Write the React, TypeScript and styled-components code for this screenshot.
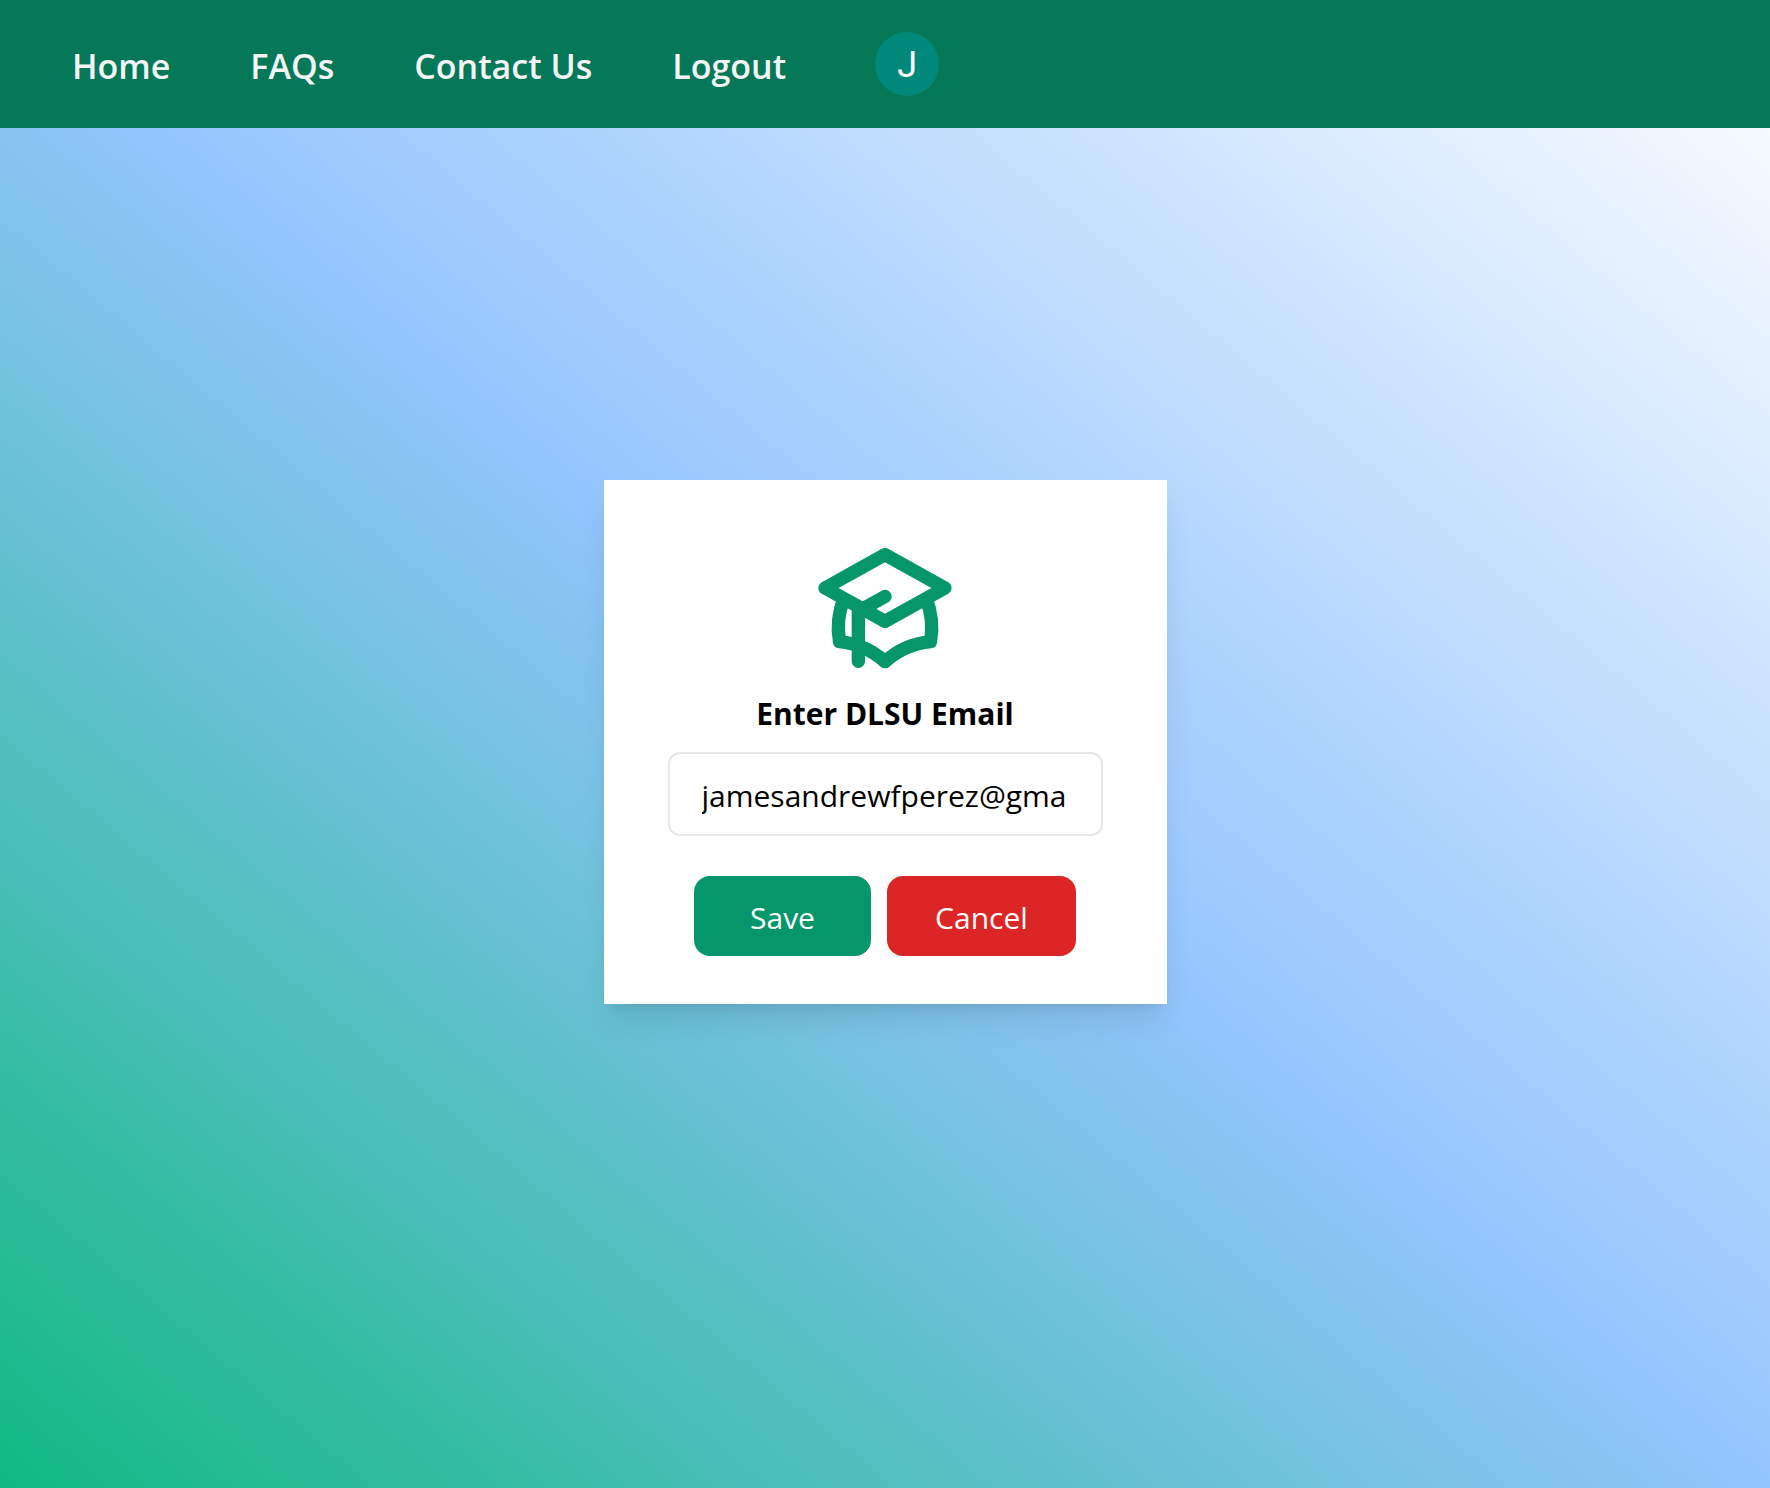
import React, { useState } from "react";
import styled, { createGlobalStyle } from "styled-components";

const GlobalStyle = createGlobalStyle`
  *, *::before, *::after { box-sizing: border-box; }
  body {
    margin: 0;
    font-family: "Segoe UI", "Open Sans", "Noto Sans", sans-serif;
    color: #000;
  }
`;

const Page = styled.div`
  display: flex;
  flex-direction: column;
  min-height: 100vh;
  background: linear-gradient(to top right, #10b981, #93c5fd, #ffffff);
`;

const NavBar = styled.nav`
  display: flex;
  align-items: center;
  gap: 80px;
  height: 128px;
  padding: 0 72px;
  background: #047857;
`;

const NavLink = styled.a`
  padding-top: 4px;
  font-size: 34px;
  line-height: 56px;
  font-weight: 600;
  color: #f3f4f6;
  text-decoration: none;
`;

const Avatar = styled.div`
  display: flex;
  align-items: center;
  justify-content: center;
  width: 64px;
  height: 64px;
  margin-left: 9px;
  padding-top: 2px;
  border-radius: 50%;
  background: #00897b;
  color: #fff;
  font-family: Roboto, sans-serif;
  font-size: 36px;
  line-height: 64px;
`;

const Main = styled.main`
  display: flex;
  flex: 1;
  align-items: center;
  justify-content: center;
  padding-bottom: 132px;
`;

const Card = styled.form`
  display: flex;
  flex-direction: column;
  align-items: center;
  padding: 48px 64px;
  background: #fff;
  box-shadow: 0 20px 30px -6px rgba(0, 0, 0, 0.1), 0 8px 12px -8px rgba(0, 0, 0, 0.1);
`;

const CapIcon = styled.svg`
  display: block;
  width: 160px;
  height: 160px;
  color: #059669;
`;

const Label = styled.label`
  font-size: 30px;
  line-height: 52px;
  font-weight: 700;
`;

const EmailInput = styled.input`
  width: 435px;
  height: 84px;
  margin-top: 12px;
  padding: 2px 34px 0 32px;
  border: 2px solid #e5e7eb;
  border-radius: 12px;
  background: #fff;
  color: #000;
  font: inherit;
  font-size: 30px;
`;

const Actions = styled.div`
  display: flex;
  gap: 16px;
  margin-top: 40px;
`;

const Button = styled.button<{ $tone: string; $width: number }>`
  width: ${(p) => p.$width}px;
  height: 80px;
  padding: 2px 0 0;
  border: 0;
  border-radius: 16px;
  background: ${(p) => p.$tone};
  color: #fff;
  font: inherit;
  font-size: 30px;
`;

const links = ["Home", "FAQs", "Contact Us", "Logout"];

export default function App() {
  const [email, setEmail] = useState("jamesandrewfperez@gmail.com");
  return (
    <>
      <GlobalStyle />
      <Page>
        <NavBar>
          {links.map((text) => (
            <NavLink key={text} href="#">{text}</NavLink>
          ))}
          <Avatar>J</Avatar>
        </NavBar>
        <Main>
          <Card onSubmit={(e) => e.preventDefault()}>
            <CapIcon viewBox="0 0 24 24" fill="none" stroke="currentColor" strokeWidth="2" strokeLinecap="round" strokeLinejoin="round" aria-hidden="true">
              <path d="M12 14l9-5-9-5-9 5 9 5zm0 0l6.16-3.422a12.083 12.083 0 01.665 6.479A11.952 11.952 0 0012 20.055a11.952 11.952 0 00-6.824-2.998 12.078 12.078 0 01.665-6.479L12 14zm-4 6v-7.5l4-2.222" />
            </CapIcon>
            <Label htmlFor="email">Enter DLSU Email</Label>
            <EmailInput id="email" type="text" value={email} onChange={(e) => setEmail(e.target.value)} />
            <Actions>
              <Button type="submit" $tone="#059669" $width={177}>Save</Button>
              <Button type="button" $tone="#dc2626" $width={189}>Cancel</Button>
            </Actions>
          </Card>
        </Main>
      </Page>
    </>
  );
}
